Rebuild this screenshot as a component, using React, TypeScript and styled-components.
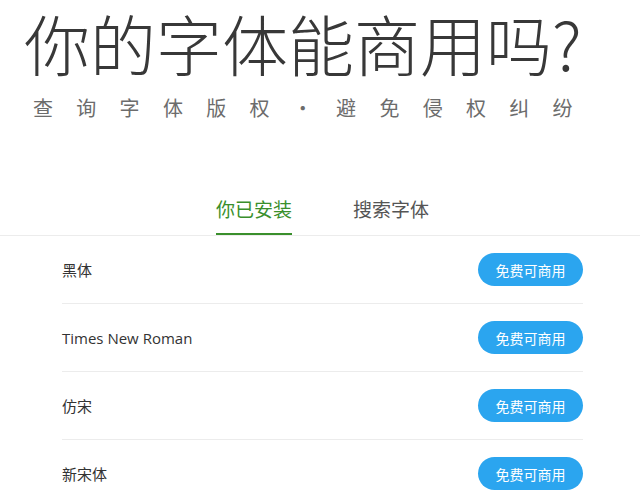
import React, {useState} from 'react'
import styled, {createGlobalStyle} from 'styled-components'

const fonts = {
  cjk: `"Noto Sans CJK SC", "Noto Sans", sans-serif`,
  list: `"Open Sans", "Noto Sans CJK SC", sans-serif`,
}

const color = {
  title: '#383838',
  sub: '#6c6c6c',
  green: '#3a8f2c',
  tab: '#555555',
  text: '#333333',
  line: '#ececec',
  blue: '#2ba5ef',
}

const subtitle = ['查', '询', '字', '体', '版', '权', '·', '避', '免', '侵', '权', '纠', '纷']
const tabs = ['你已安装', '搜索字体']
const installed = ['黑体', 'Times New Roman', '仿宋', '新宋体']

export default function App() {
  const [active, setActive] = useState<number>(0)

  return (
    <Page>
      <GlobalStyle />

      {/** header **/}
      <Header>
        <Title>你的字体能商用吗?</Title>
        <Subtitle>
          {subtitle.map((char, i) => <SubChar key={i}>{char}</SubChar>)}
        </Subtitle>
      </Header>

      {/** tabs **/}
      <TabBar>
        {tabs.map((tab, i) => (
          <Tab key={tab} $active={i === active} onClick={() => setActive(i)}>
            {tab}
          </Tab>
        ))}
      </TabBar>

      {/** font list **/}
      <FontList>
        {installed.map((name) => (
          <FontRow key={name}>
            <FontName>{name}</FontName>
            <LicenseButton>免费可商用</LicenseButton>
          </FontRow>
        ))}
      </FontList>
    </Page>
  )
}

const GlobalStyle = createGlobalStyle`
  html, body {
    margin: 0;
    padding: 0;
    background: #ffffff;
  }
  body {
    font-family: ${fonts.cjk};
  }
`
const Page = styled.div`
  width: 640px;
  height: 500px;
  overflow: hidden;
  background: #ffffff;
`
const Header = styled.div`
  padding: 2px 0 0 24px;
`
const Title = styled.h1`
  margin: 0;
  font-family: ${fonts.cjk};
  font-size: 66px;
  font-weight: 300;
  line-height: 80px;
  color: ${color.title};
  white-space: nowrap;
`
const Subtitle = styled.div`
  display: flex;
  gap: 23.3px;
  margin: 16px 0 0 9px;
`
const SubChar = styled.span`
  width: 20px;
  text-align: center;
  font-size: 20px;
  line-height: 20px;
  color: ${color.sub};
`
const TabBar = styled.div`
  display: flex;
  justify-content: center;
  gap: 61px;
  margin-top: 81px;
  padding-left: 5px;
  border-bottom: 1px solid ${color.line};
`
const Tab = styled.div<{$active: boolean}>`
  padding-bottom: 15px;
  font-size: 19px;
  line-height: 19px;
  color: ${({$active}) => $active ? color.green : color.tab};
  border-bottom: 2px solid ${({$active}) => $active ? color.green : 'transparent'};
  cursor: pointer;
`
const FontList = styled.div`
  width: 521px;
  margin-left: 62px;
`
const FontRow = styled.div`
  display: flex;
  align-items: center;
  justify-content: space-between;
  padding: 17px 0;
  border-bottom: 1px solid ${color.line};
`
const FontName = styled.span`
  font-family: ${fonts.list};
  font-size: 15px;
  color: ${color.text};
`
const LicenseButton = styled.button`
  height: 33px;
  width: 105px;
  padding: 0;
  border: none;
  border-radius: 17px;
  background: ${color.blue};
  color: #ffffff;
  font-family: ${fonts.cjk};
  font-size: 14px;
  cursor: pointer;
`
